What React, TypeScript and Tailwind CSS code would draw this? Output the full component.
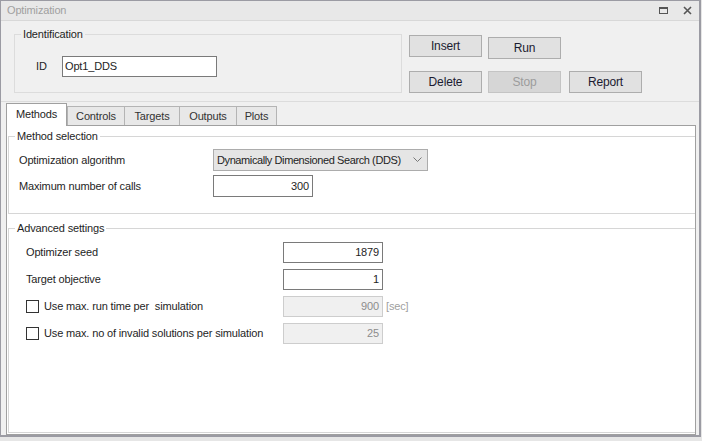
import React from 'react';

const font = { fontFamily: '"Liberation Sans", Arial, sans-serif' };

const Btn = ({ label, disabled = false, className = '' }: { label: string; disabled?: boolean; className?: string }) => (
  <div
    className={`w-[73px] h-[22px] flex items-center justify-center border text-[12px] ${
      disabled ? 'bg-[#d6d6d6] border-[#c4c4c4] text-[#9c9c9c]' : 'bg-[#e1e1e1] border-[#adadad] text-[#1b1b30]'
    } ${className}`}
  >
    {label}
  </div>
);

const NumInput = ({ value, disabled = false }: { value: string; disabled?: boolean }) => (
  <div
    className={`w-[100px] h-[21px] flex items-center justify-end pr-[3px] border ${
      disabled ? 'bg-[#f0f0f0] border-[#cdcdcd] text-[#8c8c8c]' : 'bg-white border-[#7a7a7a] text-[#1e1e1e]'
    }`}
  >
    {value}
  </div>
);

const Check = () => <div className="w-[13px] h-[13px] border border-[#333] bg-white" />;

const tabs = [
  { label: 'Controls', w: 'w-[58px]' },
  { label: 'Targets', w: 'w-[55px]' },
  { label: 'Outputs', w: 'w-[57px]' },
  { label: 'Plots', w: 'w-[40px]' },
];

export default function App() {
  return (
    <div className="w-[702px] h-[441px] bg-[#e6e6e6] text-[#1e1e1e] text-[11px] tracking-[-0.15px]" style={font}>
      <div className="w-[701px] h-[437px] border border-[#9b9ba3] border-r-2 border-b-2 bg-[#f0f0f0] flex flex-col">
        {/* title bar */}
        <div className="h-[20px] shrink-0 bg-[#e8e8e8] border-b border-[#d8d8d8] flex items-center pl-[6px] pr-[7px] text-[#a0a0a0]">
          <span>Optimization</span>
          <div className="ml-auto flex items-center gap-[15px]">
            <div className="w-[9px] h-[7px] border border-t-2 border-[#555]" />
            <svg width="9" height="9" viewBox="0 0 9 9">
              <path d="M1 1 L8 8 M8 1 L1 8" stroke="#555" strokeWidth="1.6" />
            </svg>
          </div>
        </div>

        {/* top section */}
        <div className="h-[81px] shrink-0 border-b border-[#dcdcdc] flex items-start">
          <div className="relative ml-[13px] mt-[13px] w-[388px] h-[59px] border border-[#dcdcdc]">
            <span className="absolute left-[6px] -top-[9px] px-[2px] bg-[#f0f0f0] leading-[16px]">Identification</span>
            <div className="flex items-center mt-[21px] ml-[21px]">
              <span className="w-[26px]">ID</span>
              <div className="w-[155px] h-[21px] bg-white border border-[#7a7a7a] flex items-center pl-[2px]">
                Opt1_DDS
              </div>
            </div>
          </div>
          <div className="ml-[7px] mt-[14px] flex flex-col">
            <div className="flex items-start gap-[6px]">
              <Btn label="Insert" />
              <Btn label="Run" className="mt-[2px]" />
            </div>
            <div className="flex items-start gap-[6px] mt-[12px]">
              <Btn label="Delete" />
              <Btn label="Stop" disabled />
              <Btn label="Report" className="ml-[2px]" />
            </div>
          </div>
        </div>

        {/* tabs */}
        <div className="h-[23px] shrink-0 flex items-end pl-[5px]">
          <div className="relative z-10 w-[61px] h-[23px] -mb-px bg-white border border-b-0 border-[#a0a0a0] flex items-center justify-center pb-[2px]">
            Methods
          </div>
          {tabs.map((t, i) => (
            <div
              key={t.label}
              className={`${t.w} h-[19px] bg-[#e8e8e8] border-t border-r border-[#b4b4b4] ${i === 0 ? 'border-l' : ''} flex items-center justify-center text-[#333]`}
            >
              {t.label}
            </div>
          ))}
        </div>

        {/* panel */}
        <div className="ml-[5px] w-[690px] h-[310px] bg-white border border-[#a0a0a0] flex flex-col">
          {/* method selection */}
          <div className="relative ml-[1px] mt-[10px] h-[78px] border-l border-t border-b border-[#d6d6d6] pl-[10px] pt-[12px]">
            <span className="absolute left-[6px] -top-[9px] px-[2px] bg-white leading-[16px]">Method selection</span>
            <div className="flex items-center h-[22px]">
              <span className="w-[194px]">Optimization algorithm</span>
              <div className="w-[215px] h-[22px] bg-[#e5e5e5] border border-[#acacac] flex items-center pl-[3px] pr-[5px]">
                <span className="whitespace-nowrap tracking-[-0.4px]">Dynamically Dimensioned Search (DDS)</span>
                <svg className="ml-auto shrink-0" width="9" height="6" viewBox="0 0 9 6">
                  <polyline points="0.5,0.5 4.5,4.5 8.5,0.5" fill="none" stroke="#777" strokeWidth="1" />
                </svg>
              </div>
            </div>
            <div className="flex items-center h-[22px] mt-[4px]">
              <span className="w-[194px]">Maximum number of calls</span>
              <div className="w-[100px] h-[22px] bg-white border border-[#7a7a7a] flex items-center justify-end pr-[3px]">300</div>
            </div>
          </div>

          {/* advanced settings */}
          <div className="relative ml-[1px] mt-[14px] h-[205px] border-l border-t border-b border-[#d6d6d6] pl-[17px] pt-[13px] flex flex-col gap-[6px]">
            <span className="absolute left-[6px] -top-[9px] px-[2px] bg-white leading-[16px]">Advanced settings</span>
            <div className="flex items-center h-[21px]">
              <span className="w-[257px]">Optimizer seed</span>
              <NumInput value="1879" />
            </div>
            <div className="flex items-center h-[21px]">
              <span className="w-[257px]">Target objective</span>
              <NumInput value="1" />
            </div>
            <div className="flex items-center h-[21px]">
              <div className="w-[257px] flex items-center gap-[5px]">
                <Check />
                <span className="whitespace-pre">Use max. run time per  simulation</span>
              </div>
              <NumInput value="900" disabled />
              <span className="ml-[3px] text-[#a0a0a0]">[sec]</span>
            </div>
            <div className="flex items-center h-[21px]">
              <div className="w-[257px] flex items-center gap-[5px]">
                <Check />
                <span className="whitespace-nowrap">Use max. no of invalid solutions per simulation</span>
              </div>
              <NumInput value="25" disabled />
            </div>
          </div>
        </div>
      </div>
    </div>
  );
}
